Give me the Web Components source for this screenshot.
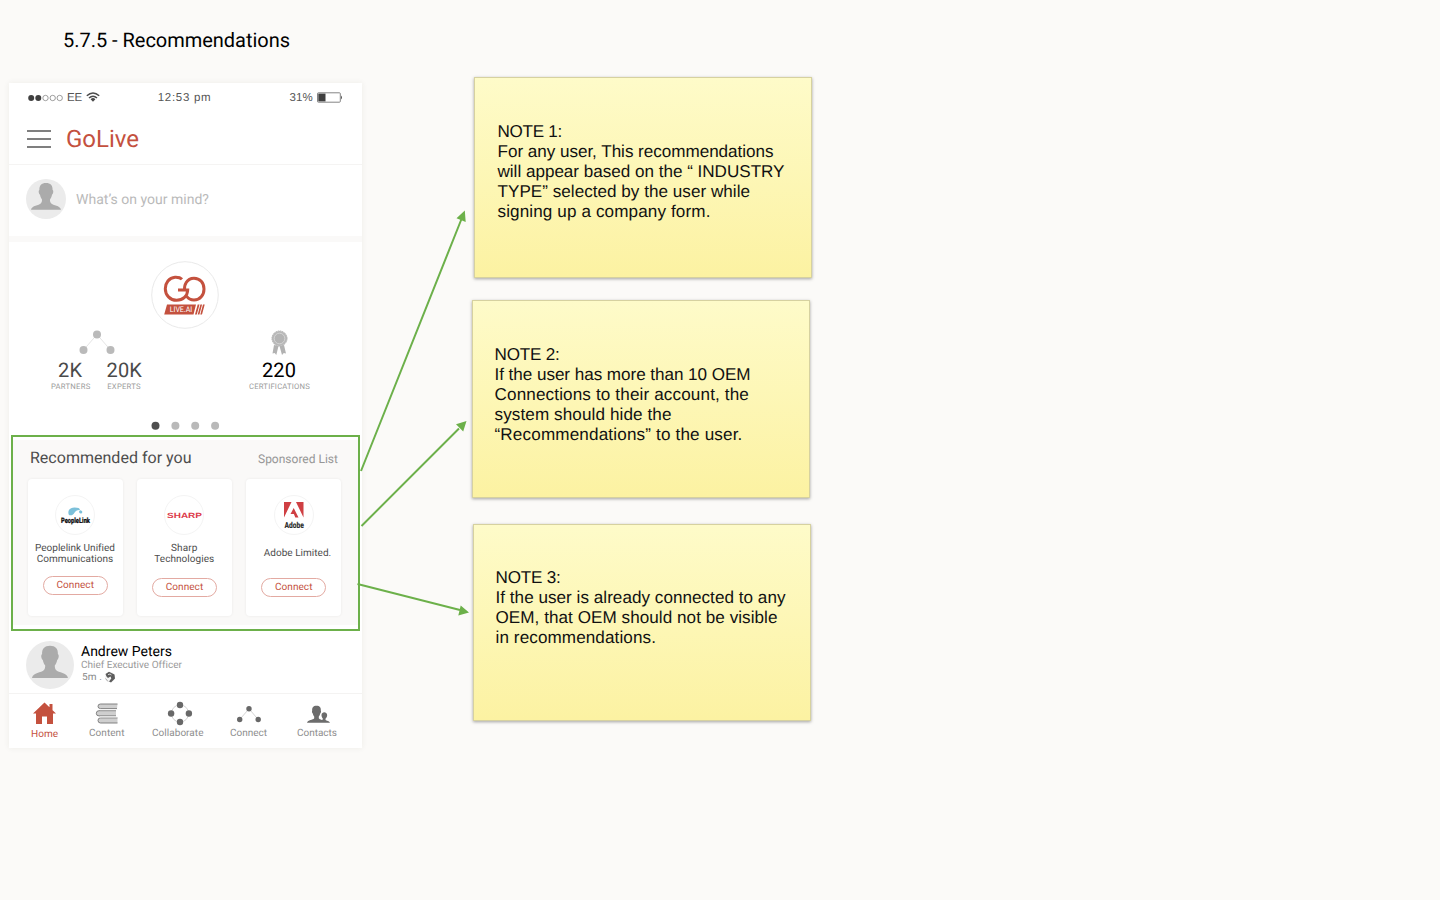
<!DOCTYPE html>
<html lang="en">
<head>
<meta charset="utf-8">
<title>5.7.5 - Recommendations</title>
<style>
html,body{margin:0;height:100%;overflow:hidden;background:#fbfaf8}
body{font-family:Roboto,"Liberation Sans",sans-serif;text-rendering:geometricPrecision}
</style>
</head>
<body>
<spec-board></spec-board>
<script>
const define = (name, html, init) => {
  const t = document.createElement('template');
  t.innerHTML = html;
  customElements.define(name, class extends HTMLElement {
    constructor() {
      super();
      this.attachShadow({ mode: 'open' }).append(t.content.cloneNode(true));
    }
    connectedCallback() { if (init) init.call(this, this.shadowRoot); }
  });
};

// A single line of text tracked to a given width (w).
define('fit-line', `<style>:host{display:block;white-space:nowrap}span{display:inline-block}</style><span><slot></slot></span>`,
function (r) {
  const s = r.querySelector('span'), w = +this.getAttribute('w'), n = this.textContent.length;
  if (!w) return;
  s.style.letterSpacing = '0';
  const d = (w - s.getBoundingClientRect().width) / n;
  s.style.letterSpacing = d.toFixed(4) + 'px';
});

define('user-avatar', `<style>
:host{display:block;border-radius:50%;background:#ebebeb;overflow:hidden;flex:none}
svg{display:block;width:100%;height:100%}</style>
<svg viewBox="0 0 40 40"><path fill="#ababab" d="M20 4C15.500 4 13.200 6.500 13.400 11C12.200 11.300 12.700 15 14 15.800C14.400 18 15.200 19.500 16 20.500C16 22 15.900 23 15 24.200C12.800 26.800 6 26 5 30.800H35C34 26 27.200 26.800 25 24.200C24.100 23 24 22 24 20.500C24.800 19.500 25.600 18 26 15.800C27.300 15 27.800 11.300 26.600 11C26.800 6.500 24.500 4 20 4z"/></svg>`);

define('status-bar', `<style>
:host{display:grid;grid-template-columns:1fr auto 1fr;align-items:center;height:29px;padding:0 19px 0 19px;font:11.500px/14px "Liberation Sans",Arial,sans-serif;color:#555}
div{display:flex;align-items:center}.e{justify-content:flex-end;gap:4px}.s{gap:4px}svg{display:block}
.m{margin:1px 0 0 -2px}</style>
<div class="s"><svg width="35" height="8"><g fill="#3f3f3f"><circle cx="3.200" cy="4" r="3"/><circle cx="10.300" cy="4" r="3"/></g><g fill="none" stroke="#777" stroke-width=".7"><circle cx="17.500" cy="4" r="2.700"/><circle cx="24.700" cy="4" r="2.700"/><circle cx="31.700" cy="4" r="2.700"/></g></svg>
<fit-line w="15">EE</fit-line>
<svg width="14" height="10" style="margin:-1px 0 0 0" fill="none" stroke="#4a4a4a" stroke-width="1.500"><path d="M.8 3.800Q7-1.800 13.200 3.800M3 6Q7 2.400 11 6"/><path fill="#4a4a4a" stroke="none" d="M4.600 7.200Q7 5 9.400 7.200L7 9.700z"/></svg></div>
<fit-line class="m" w="53.500">12:53 pm</fit-line>
<div class="e"><fit-line w="23.500" style="margin-top:1px">31%</fit-line><svg width="26" height="11"><rect x=".5" y=".8" width="22.800" height="9.400" rx=".8" fill="none" stroke="#777" stroke-width=".9"/><rect x="1.300" y="1.600" width="7.200" height="7.800" fill="#3f3f3f"/><path d="M24 3.500Q26 5.500 24 7.500z" fill="#555"/></svg></div>`);

define('app-header', `<style>
:host{display:flex;align-items:center;gap:15px;height:52px;padding-left:18px;border-bottom:1px solid #f5f4f3;font-size:24px;line-height:28px;color:#c4513e}
svg{display:block;margin-top:2px}fit-line{margin-top:2px}</style>
<svg width="24" height="20" stroke="#555" stroke-width="1.500"><path d="M0 2H24M0 10H24M0 18H24"/></svg><fit-line w="73">GoLive</fit-line>`);

define('post-composer', `<style>
:host{display:flex;align-items:center;gap:10px;height:71px;padding:0 0 0 17px;border-bottom:6px solid #faf9f8;font-size:14px;line-height:18px;color:#bababa}
user-avatar{width:40px;height:40px;margin-top:-3px}fit-line{margin-top:-2px}</style>
<user-avatar></user-avatar><fit-line w="133">What’s on your mind?</fit-line>`);

define('brand-mark', `<style>
:host{display:block;width:68px;height:68px}svg{display:block}text{font:7.900px Roboto,sans-serif;fill:#fff}</style>
<svg width="68" height="68"><circle cx="34" cy="34" r="33.300" fill="#fff" stroke="#e6e6e6" stroke-width=".9"/>
<g fill="none" stroke="#c4513e" stroke-width="3"><path d="M31 18.300C29 16.300 26 16.200 24 16.300C18 16.700 14.300 22 14.300 27.700C14.300 34 19 39.300 25.600 39.300C32 39.300 36.500 35 36.700 29H27"/><path d="M35 21.800C37 18.500 40 17.200 43 17.200C49 17.200 53 22 53 27.900C53 34 49 39 43 39C39.500 39 37 37.300 35.500 35M33.500 28.300C33.500 25 34 23 35.300 21.500"/></g>
<path fill="#c4513e" d="M16 43.500H45L42.500 53.500H13.200zM46.700 43.500h1.800l-2.700 10H44zM49.400 43.500h1.700l-2.700 10h-1.700zM52 43.500h1.700l-2.700 10h-1.700z"/>
<text x="18.700" y="51.300" textLength="22.500" lengthAdjust="spacingAndGlyphs">LIVE.AI</text></svg>`);

define('stat-item', `<style>
:host{display:flex;flex-direction:column;align-items:center;font-size:20px;line-height:24px;color:#4a4a4a}
.l{font-size:7.700px;line-height:9px;color:#9a9a9a}</style>
<slot></slot><div class="l"><slot name="label"></slot></div>`);

define('stats-panel', `<style>
:host{display:flex;flex-direction:column;height:193px;align-items:center;background:#fff}
brand-mark{margin:19px 0 0 -1px}
.row{display:flex;width:100%;box-sizing:border-box;justify-content:space-between;padding:1px 52px 0 42px}
.g{display:flex;flex-direction:column;align-items:center}.n{display:flex;gap:16px}
svg{display:block}.net{margin:-1px 0 1px 0}.dots{margin-top:30px}</style>
<brand-mark></brand-mark>
<div class="row"><div class="g">
<svg class="net" width="36" height="28"><path d="M4.500 21L18 5.500L31.500 21" stroke="#ddd" stroke-width=".8" fill="none"/><g fill="#bababa"><circle cx="18" cy="5.500" r="4"/><circle cx="4.500" cy="21" r="4"/><circle cx="31.500" cy="21" r="4"/></g></svg>
<div class="n"><stat-item><fit-line w="24.500" style="margin-left:-1px">2K</fit-line><fit-line slot="label" w="39.500">PARTNERS</fit-line></stat-item><stat-item style="margin-left:-.5px"><fit-line w="35.500" style="margin-left:.5px">20K</fit-line><fit-line slot="label" w="33.500">EXPERTS</fit-line></stat-item></div></div>
<div class="g"><svg width="20" height="28"><g transform="translate(-1 0)"><path fill="#b2b2b2" d="M5 15L3.500 23.500l2.200-.6 1.600 2L9.500 16zM15 15l2 8.500-2.200-.6-1.800 2L10.500 16z"/><circle cx="10.500" cy="8.500" r="7.600" fill="#b8b8b8" stroke="#b2b2b2" stroke-width=".9" stroke-dasharray="1.300 .7"/><circle cx="10.500" cy="8.500" r="5.300" fill="#b4b4b4" stroke="#dadada" stroke-width=".8"/></g></svg>
<stat-item style="color:#000"><fit-line w="34" style="margin-left:-1px">220</fit-line><fit-line slot="label" w="61">CERTIFICATIONS</fit-line></stat-item></div></div>
<svg class="dots" width="69" height="10"><circle cx="4.500" cy="4.700" r="4" fill="#4e4e4e"/><g fill="#b9b9b9"><circle cx="24.400" cy="4.700" r="4"/><circle cx="44.200" cy="4.700" r="4"/><circle cx="64.100" cy="4.700" r="4"/></g></svg>`);

define('vendor-card', `<style>
:host{display:flex;flex-direction:column;align-items:center;width:95px;height:137px;box-sizing:border-box;padding-top:16px;background:#fff;border-radius:4px;box-shadow:0 0 3px rgba(0,0,0,.07);font-size:10px;line-height:11px;color:#4d4d4d;text-align:center}
.logo{width:40px;height:40px;box-sizing:border-box;border:1px solid #f4f4f4;border-radius:50%;display:flex;align-items:center;justify-content:center}
.name{height:22px;margin-top:8px;display:flex;flex-direction:column;align-items:center;justify-content:center}
button{all:unset;box-sizing:border-box;width:65px;height:19px;margin-top:var(--gap,13.500px);border:1px solid #e3aaa2;border-radius:10px;color:#c4513e;font-size:10px;line-height:18px;display:flex;justify-content:center}</style>
<div class="logo"><slot name="logo"></slot></div><div class="name"><slot></slot></div><button><fit-line w="37.500" style="margin-left:.5px">Connect</fit-line></button>`);

define('recommended-list', `<style>
:host{display:block;box-sizing:border-box;height:196px;width:349px;margin-left:2px;border:2px solid #6cb04a;background:linear-gradient(#fff 0 3px,#faf9f8 3px 188px,#fff 188px);padding:0 17px 0 14.500px}
header{display:flex;justify-content:space-between;align-items:baseline;height:41.500px;box-sizing:border-box;padding:12px 3px 0 2.500px;color:#4d4d4d;font-size:16px;line-height:18px}
.s{font-size:12px;color:#969696}.cards{display:flex;justify-content:space-between}
svg{display:block;flex:none;overflow:visible}</style>
<header><fit-line w="161.500">Recommended for you</fit-line><fit-line class="s" w="80">Sponsored List</fit-line></header>
<div class="cards">
<vendor-card style="--gap:11.500px"><svg slot="logo" width="38" height="24"><path fill="#7cc0da" d="M12.700 11.500C11.500 8 13.500 4.500 18.500 4.500C22.500 4.500 24 5.500 23.800 7C21.500 6.700 19.500 8 18.300 10C17 12.500 13.700 13 12.700 11.500zM24 7.300c3.500.3 2.500 3.500.7 3.300s-2.300-2.500-.7-3.300z"/><text x="5" y="20.200" textLength="29" lengthAdjust="spacingAndGlyphs" style="font:900 7.500px Roboto,sans-serif;fill:#111;stroke:#111;stroke-width:.2">PeopleLink</text></svg>
<fit-line w="79.500">Peoplelink Unified</fit-line><fit-line w="76.500">Communications</fit-line></vendor-card>
<vendor-card><svg slot="logo" width="38" height="12"><text x="2" y="8.900" textLength="35" lengthAdjust="spacingAndGlyphs" style="font:bold 7.500px 'Liberation Sans',sans-serif;fill:#dc3a4a">SHARP</text></svg>
<fit-line w="26.500">Sharp</fit-line><fit-line w="60">Technologies</fit-line></vendor-card>
<vendor-card><svg slot="logo" width="24" height="30"><path fill="#cf3f43" d="M2 2H9.500L2 17.500zM14 2h7.500V17.500zM11.700 8L16.500 17.500h-3.200l-1.400-3.500H8.500z"/><text x="2.500" y="28" textLength="19.500" lengthAdjust="spacingAndGlyphs" style="font:900 8.500px Roboto,sans-serif;fill:#333">Adobe</text></svg>
<fit-line w="67.500" style="margin:-1px 0 0 8px">Adobe Limited.</fit-line></vendor-card>
</div>`);

define('feed-post', `<style>
:host{display:flex;height:62.500px;box-sizing:border-box;padding:10px 0 0 17px;gap:7px;border-bottom:1px solid #f4f3f2;background:#fff}
user-avatar{width:48px;height:48px}.n{font-size:14px;line-height:16px;color:#000;margin-top:3px}.r{font-size:10px;line-height:12px;color:#999}
.t{display:flex;gap:2px;padding-left:1px;font-size:10px;line-height:12px;color:#888}svg{display:block;margin-top:-1px}</style>
<user-avatar></user-avatar><div><fit-line class="n" w="91">Andrew Peters</fit-line><fit-line class="r" w="100">Chief Executive Officer</fit-line>
<div class="t"><fit-line w="20">5m .</fit-line><svg width="12" height="12"><circle cx="6" cy="6" r="5" fill="#f4f4f4"/><path fill="#5d5d5d" d="M1.500 3L5 .8 10.500 3.500 11 7.500 7 11.500 5 10.500 7.300 7.500 6.500 5.500 4 7 2.500 5.500z"/><path d="M4 3.700L6 3l1.500 1" fill="none" stroke="#eee" stroke-width=".8"/><path d="M1.500 7.500L4 10.500" stroke="#aaa"/></svg></div></div>`);

define('nav-item', `<style>
:host{display:flex;flex-direction:column;align-items:center;font-size:10px;line-height:12px;color:#8e8e8e}
:host([active]){color:#c4513e}::slotted(svg){display:block;height:26px;width:28px;margin-bottom:2px}</style>
<slot name="icon"></slot><slot></slot>`);

define('tab-bar', `<style>
:host{display:flex;height:54.500px;box-sizing:border-box;padding:6.500px 0 0 21.500px;background:#fff}
nav-item{margin-left:var(--x,0)}</style>
<nav-item active><svg slot="icon" viewBox="0 0 28 26" style="transform:translateX(-.5px)"><path fill="#c4513e" d="M14 2.500L25.500 13.500H22.500V24H16.500V16.500H11.500V24H5.500V13.500H2.500zM19 4h3v6.500L19 7.500z"/></svg><fit-line w="27" style="margin-top:1px">Home</fit-line></nav-item>
<nav-item style="--x:30.500px"><svg slot="icon" viewBox="0 0 28 26"><g fill="#cfcfcf" stroke="#777" stroke-width=".9"><path d="M24.500 4H7.500Q5 4 5 6.300T7.500 8.600H24"/><path d="M23 10.700H6Q3.300 10.700 3.300 13.300T6 15.900H23"/><path d="M24.500 17.900H7.500Q5 17.900 5 20.400T7.500 23H24.500"/></g><path d="M7 9.700H24.500M7 16.900H24" stroke="#f4f4f4" stroke-width=".8"/></svg><fit-line w="35.500">Content</fit-line></nav-item>
<nav-item style="--x:27.500px"><svg slot="icon" viewBox="0 0 28 26" style="transform:translateX(2px)"><circle cx="14" cy="13.500" r="8.600" fill="none" stroke="#c8c8c8" stroke-width=".8"/><g fill="#686868"><circle cx="14" cy="5" r="3.200"/><circle cx="14" cy="22" r="3.200"/><circle cx="5.100" cy="13.500" r="3.200"/><circle cx="22.900" cy="13.500" r="3.200"/></g></svg><fit-line w="51.500">Collaborate</fit-line></nav-item>
<nav-item style="--x:26.500px"><svg slot="icon" viewBox="0 0 28 26"><path d="M4.700 19.500L14 8.800L23.200 19.500" fill="none" stroke="#c8c8c8" stroke-width=".8"/><g fill="#686868"><circle cx="14" cy="8.800" r="2.700"/><circle cx="4.700" cy="19.500" r="2.700"/><circle cx="23.200" cy="19.500" r="2.700"/></g></svg><fit-line w="37">Connect</fit-line></nav-item>
<nav-item style="--x:30px"><svg slot="icon" viewBox="0 0 28 26" style="transform:translateX(1.500px)"><path fill="#6c6c6c" d="M12 5.700C8.700 5.700 7.300 7.800 7.700 10.600C7.200 11.500 7.500 13 8.300 13.600C8.600 15 9.100 15.900 9.700 16.600V18.300C8.500 20.300 3.300 19.500 2.500 22.800H25.500C25 20.700 21.800 21.200 21 19.700V18.700C22.300 17.500 22.800 16.300 22.600 14.800C22.400 11.300 17.200 11.300 17 14.800C16.900 16.300 17.400 17.500 18.300 18.600V19.500L17.300 20C16 19.400 14.700 19.200 14.300 18.300V16.600C14.900 15.900 15.400 15 15.700 13.600C16.500 13 16.800 11.500 16.300 10.600C16.700 7.800 15.300 5.700 12 5.700z"/></svg><fit-line w="40">Contacts</fit-line></nav-item>`);

define('phone-screen', `<style>
:host{display:flex;flex-direction:column;width:353px;height:665px;background:#fff;box-shadow:0 0 6px rgba(60,50,30,.07)}</style>
<status-bar></status-bar><app-header></app-header><post-composer></post-composer><stats-panel></stats-panel><recommended-list></recommended-list><feed-post></feed-post><tab-bar></tab-bar>`);

define('sticky-note', `<style>
:host{display:block;box-sizing:border-box;width:338px;padding:44px 0 0 22.500px;border:1px solid #d6d1a0;background:linear-gradient(#fefbc9,#fcf2a2);box-shadow:0 1px 3px rgba(0,0,0,.35);font:17.100px/20px "Liberation Sans",Arial,sans-serif;color:#111}</style><slot></slot>`);

// Free canvas: title, phone mock-up, notes and the arrows that join them.
define('spec-board', `<style>
:host{display:block;position:relative;width:1440px;height:900px;overflow:hidden;background:#fbfaf8}
.title,phone-screen,sticky-note,.arrows{position:absolute}
.title{left:63px;top:28px;font-size:20px;line-height:24px;color:#000}
phone-screen{left:9px;top:83px}.arrows{left:0;top:0;pointer-events:none}
.a{left:474px;top:77px;height:201px}.b{left:472px;top:300px;height:198px;padding-left:21.500px}.c{left:473px;top:524px;height:197px;padding:43px 0 0 21.500px}</style>
<fit-line class="title" w="227">5.7.5 - Recommendations</fit-line>
<phone-screen></phone-screen>
<sticky-note class="a"><fit-line w="64.500">NOTE 1:</fit-line><fit-line w="276">For any user, This recommendations</fit-line><fit-line w="287">will appear based on the “ INDUSTRY</fit-line><fit-line w="252.500">TYPE” selected by the user while</fit-line><fit-line w="213">signing up a company form.</fit-line></sticky-note>
<sticky-note class="b"><fit-line w="65">NOTE 2:</fit-line><fit-line w="256">If the user has more than 10 OEM</fit-line><fit-line w="254.500">Connections to their account, the</fit-line><fit-line w="177">system should hide the</fit-line><fit-line w="248">“Recommendations” to the user.</fit-line></sticky-note>
<sticky-note class="c"><fit-line w="65">NOTE 3:</fit-line><fit-line w="290">If the user is already connected to any</fit-line><fit-line w="282">OEM, that OEM should not be visible</fit-line><fit-line w="160.500">in recommendations.</fit-line></sticky-note>
<svg class="arrows" width="480" height="640" stroke="#6cb04a" fill="#6cb04a" stroke-width="2"><path d="M361 471L461.500 219M361.500 526L459 428.500M357.500 584L460 610"/><path stroke="none" d="M464.800 210.500L465.700 222L456.500 218.300zM466.500 421L463.200 431.500L456 424.300zM469 612.500L458.300 615.500L460.700 605.500z"/></svg>`);
</script>
</body>
</html>
